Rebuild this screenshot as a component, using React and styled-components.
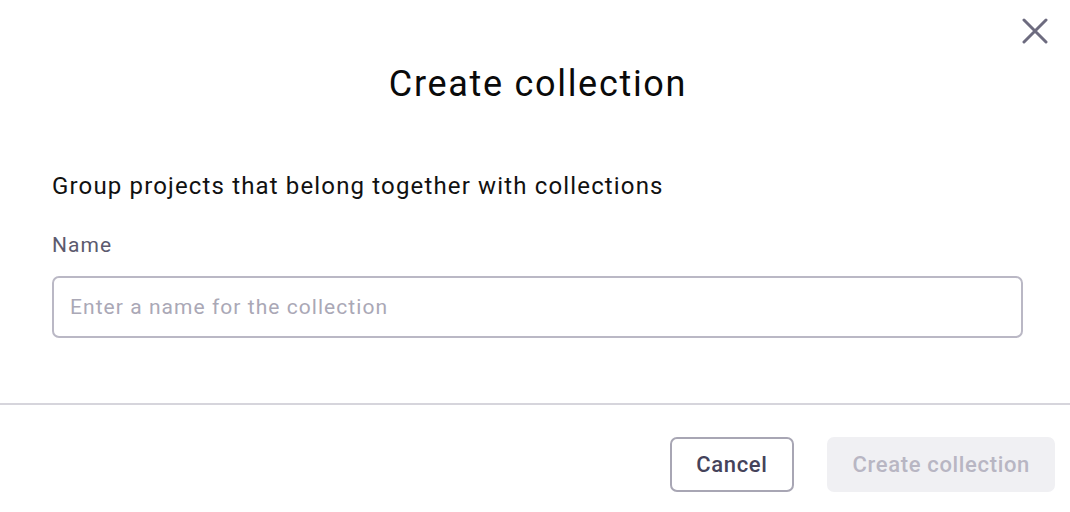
import React from "react";
import styled, { createGlobalStyle } from "styled-components";

const GlobalStyle = createGlobalStyle`
  html, body {
    margin: 0;
    padding: 0;
    background: #ffffff;
    font-family: Roboto, "Liberation Sans", sans-serif;
  }
  * { box-sizing: border-box; }
`;

const Modal = styled.div`
  position: relative;
  width: 1070px;
  height: 512px;
  background: #fff;
  display: flex;
  flex-direction: column;
`;

const Header = styled.header`
  padding: 60px 0 0 6px;
  display: flex;
  justify-content: center;
`;

const Title = styled.h1`
  margin: 0;
  font-size: 36px;
  line-height: 48px;
  font-weight: 400;
  letter-spacing: 0.047em;
  color: #0a0a0a;
`;

const CloseButton = styled.button`
  position: absolute;
  top: 14px;
  right: 18px;
  width: 34px;
  height: 34px;
  padding: 0;
  border: none;
  background: none;
  display: flex;
  align-items: center;
  justify-content: center;
  cursor: pointer;
`;

const Body = styled.div`
  padding: 62px 47px 65px 52px;
  display: flex;
  flex-direction: column;
`;

const Intro = styled.p`
  margin: 0;
  font-size: 24px;
  line-height: 32px;
  letter-spacing: 0.048em;
  color: #111111;
`;

const Label = styled.label`
  margin-top: 29px;
  font-size: 21px;
  line-height: 28px;
  letter-spacing: 0.05em;
  color: #5c5a6e;
`;

const Input = styled.input`
  margin-top: 17px;
  height: 62px;
  width: 100%;
  border: 2px solid #bab8c5;
  border-radius: 7px;
  padding: 0 16px;
  font-family: inherit;
  font-size: 21px;
  letter-spacing: 0.05em;
  color: #222;
  outline: none;
  &::placeholder {
    color: #aaa8b6;
  }
`;

const Divider = styled.hr`
  margin: 0;
  border: none;
  height: 2px;
  background: #d6d5dc;
`;

const Footer = styled.footer`
  padding: 32px 15px 0 0;
  display: flex;
  justify-content: flex-end;
  gap: 33px;
`;

const Button = styled.button`
  height: 55px;
  padding: 0 ${(p) => (p.$primary ? "23px 0 24px" : "24px")};
  border-radius: 7px;
  font-family: inherit;
  font-size: 22px;
  font-weight: 500;
  letter-spacing: 0.03em;
  border: ${(p) => (p.$primary ? "2px solid #f0f0f3" : "2px solid #a8a6b4")};
  background: ${(p) => (p.$primary ? "#f0f0f3" : "#ffffff")};
  color: ${(p) => (p.$primary ? "#b8b6c3" : "#45435a")};
  cursor: ${(p) => (p.$primary ? "default" : "pointer")};
`;

function App() {
  return (
    <>
      <GlobalStyle />
      <Modal>
        <CloseButton aria-label="Close">
          <svg width="26" height="26" viewBox="0 0 26 26">
            <path
              d="M2 2 L24 24 M24 2 L2 24"
              stroke="#6d6b7f"
              strokeWidth="3"
              strokeLinecap="round"
            />
          </svg>
        </CloseButton>
        <Header>
          <Title>Create collection</Title>
        </Header>
        <Body>
          <Intro>Group projects that belong together with collections</Intro>
          <Label htmlFor="name">Name</Label>
          <Input id="name" placeholder="Enter a name for the collection" />
        </Body>
        <Divider />
        <Footer>
          <Button>Cancel</Button>
          <Button $primary disabled>
            Create collection
          </Button>
        </Footer>
      </Modal>
    </>
  );
}

export default App;
